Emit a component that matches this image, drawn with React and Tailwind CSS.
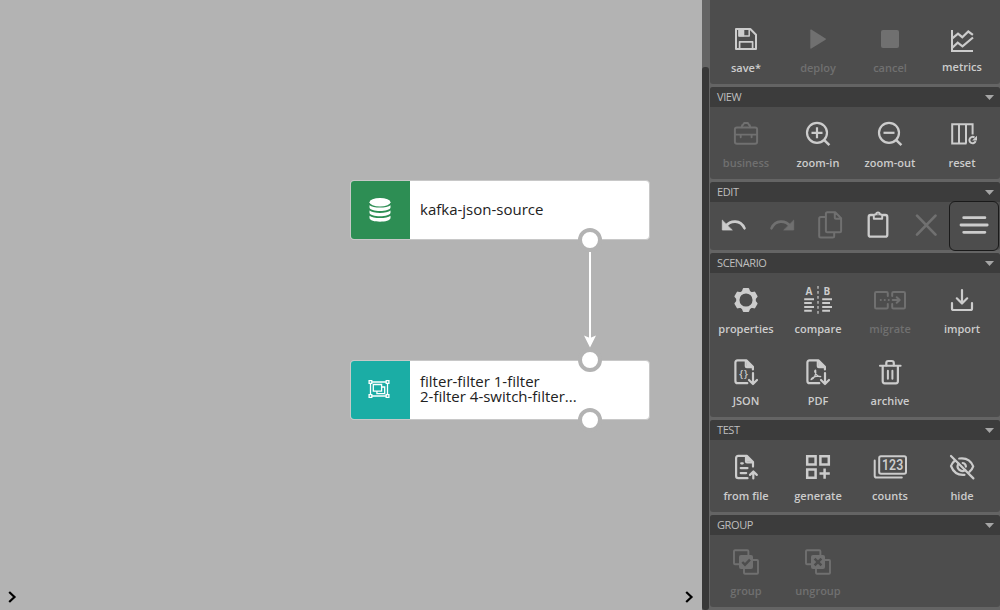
import React from "react";

const BG = "#4d4d4d";

function Icon({ children }) {
  return (
    <svg
      width="32"
      height="32"
      viewBox="0 0 32 32"
      fill="none"
      stroke="currentColor"
      strokeWidth="2.200"
      strokeLinecap="round"
      strokeLinejoin="round"
      className="shrink-0 overflow-visible"
    >
      {children}
    </svg>
  );
}

const filled = { fill: "currentColor", stroke: "none" };

const icons = {
  save: (
    <>
      <path d="M6 6h14.3l5.7 5.700V26H6z" strokeWidth="2" />
      <path d="M9.6 26v-7.200h13V26" strokeWidth="1.7" />
      <path d="M9 6v7h10.200V6" strokeWidth="1.5" />
      <path d="M8.500 6h5.800v7.400H8.500z" {...filled} />
    </>
  ),
  deploy: <path d="M8.300 7.200c0-.8.5-.9 1-.6l14.200 9c.6.4.6.8 0 1.200l-14.200 8.800c-.5.3-1 .2-1-.6z" {...filled} />,
  cancel: <rect x="7" y="7" width="18" height="18" rx="2" {...filled} />,
  metrics: (
    <g strokeLinecap="butt" strokeLinejoin="miter">
      <path d="M6 7v21h21" strokeWidth="2" />
      <path d="M6.300 15.300 12 10.700l4.300 3.500 6-5.700 4.600 3.300M6.300 24.700l5.400-5 4.800 3.600L27 14.500" />
    </g>
  ),
  business: (
    <>
      <rect x="4.900" y="9.600" width="22.200" height="16.200" rx="2" strokeWidth="2" />
      <path d="M11.900 9.300V8q0-1 1-1l1.200-2h3.800L19 7q1 0 1 1v1.300M5 16.600h22M10.700 17v2.200M21.600 17v2.200" strokeWidth="1.900" />
    </>
  ),
  zoomIn: (
    <g strokeLinecap="butt">
      <circle cx="15" cy="14.800" r="10" />
      <path d="M22 21.800l5.400 5.400" strokeWidth="2.500" />
      <path d="M9.500 14.800h11M15 9.300v11" />
    </g>
  ),
  zoomOut: (
    <g strokeLinecap="butt">
      <circle cx="15" cy="14.800" r="10" />
      <path d="M22 21.800l5.400 5.400" strokeWidth="2.500" />
      <path d="M9.500 14.800h11" />
    </g>
  ),
  reset: (
    <g strokeLinecap="butt" strokeLinejoin="miter">
      <path d="M20.500 25.500H6.200V6.200h20.400v10.300M13 6v19.500M20 6v19.500" strokeWidth="2" />
      <path d="M29.600 23.200a3.200 3.200 0 1 1-1.100-3.700" strokeWidth="2" />
      <path d="M31 17.800v4.800h-4.900z" {...filled} />
    </g>
  ),
  undo: (
    <>
      <path d="M7.500 17.500C12.500 11 22.500 10.500 26.500 19.300" strokeWidth="2.600" />
      <path d="M4.300 11.500v9.500h9.600z" {...filled} stroke="currentColor" strokeWidth=".8" />
    </>
  ),
  redo: (
    <g transform="matrix(-1 0 0 1 32 0)">
      <path d="M7.500 17.500C12.500 11 22.500 10.500 26.500 19.300" strokeWidth="2.600" />
      <path d="M4.300 11.500v9.500h9.600z" {...filled} stroke="currentColor" strokeWidth=".8" />
    </g>
  ),
  copy: (
    <g strokeWidth="2">
      <path d="M11 8H6.700Q5.200 8 5.200 9.500V27q0 1.500 1.500 1.500h12q1.500 0 1.500-1.500v-3" />
      <path d="M13.400 3.200h7.800l5.900 6v12.600q0 1.500-1.500 1.500H13.400q-1.500 0-1.500-1.500V4.700q0-1.500 1.500-1.500zM20.800 3.500v5.200q0 1 1 1h5" />
    </g>
  ),
  paste: (
    <>
      <path d="M11 6H8.700Q6.700 6 6.700 8v17.700q0 2 2 2h14.600q2 0 2-2V8q0-2-2-2H21" strokeWidth="2.300" />
      <path d="M11.800 9.800V6.500q0-1 1-1H14q.3-2 2-2t2 2h1.200q1 0 1 1v3.300z" strokeWidth="1.900" />
      <circle cx="16" cy="5.800" r=".8" {...filled} />
    </>
  ),
  remove: <path d="M7 6.600l18.500 19M25.500 6.600L7 25.600" strokeWidth="2.700" />,
  layout: <path d="M5.700 8.700h21.200M3 16h26.200M5.700 23.300h21.200" strokeWidth="2.800" />,
  properties: (
    <>
      <circle cx="16" cy="16" r="8.200" strokeWidth="3.300" />
      {[0, 60, 120, 180, 240, 300].map((a) => (
        <path key={a} transform={`rotate(${a} 16 16)`} d="M11.200 9.200l1.500-4.200q.2-.9 1-.9h4.600q.8 0 1 .9l1.500 4.200q-4.800-2.200-9.600 0z" {...filled} />
      ))}
    </>
  ),
  compare: (
    <g strokeLinecap="butt">
      <text x="7" y="11.300" textAnchor="middle" fontSize="10" fontWeight="700" fontFamily="Open Sans, sans-serif" fill="currentColor" stroke="none">A</text>
      <text x="24.800" y="11.300" textAnchor="middle" fontSize="10" fontWeight="700" fontFamily="Open Sans, sans-serif" fill="currentColor" stroke="none">B</text>
      <path d="M2.200 15.200H12M2.200 19h7.600M2.200 23H12M2.200 26.800h7.600M20.200 15.200H30M20.200 19h7.800M20.200 23H30M20.200 26.800h7.800" strokeWidth="1.900" />
      <path d="M16 2v28" strokeWidth="1.600" strokeDasharray="2.700 2.300" opacity=".75" />
    </g>
  ),
  migrate: (
    <g strokeWidth="2">
      <path d="M13.800 12V9.300q0-1.300-1.300-1.300H2.300Q1 8 1 9.300v13.900q0 1.300 1.300 1.300h10.200q1.300 0 1.300-1.300V20M18.200 12V9.300q0-1.300 1.300-1.300h10.200Q31 8 31 9.300v13.900q0 1.300-1.300 1.300H19.500q-1.300 0-1.300-1.300V20" />
      <path d="M6.700 16h.1M10.700 16h.1M14.700 16h.1M18.700 16h6.700M22.700 13.200l3 2.800-3 2.800" />
    </g>
  ),
  import: <path d="M6 19v5.500Q6 26 7.500 26h17q1.500 0 1.500-1.500V19M16 6v13M10.800 14.300l5.200 5.200 5.200-5.200" />,
  json: (
    <>
      <path d="M17.300 27.200H7.600q-2.200 0-2.200-2.200V6.600q0-2.200 2.200-2.200h9l6.300 6.400v2.600M15.800 4.800v5.400q0 1 1 1h5.500M23 17v10.500M19 24l4 4 4-4" />
      <path d="M17 5v5h5.500z" {...filled} />
      <text x="13.900" y="21.600" textAnchor="middle" fontSize="10" fontWeight="600" fontFamily="Open Sans, sans-serif" letterSpacing=".8" fill="currentColor" stroke="none">{"{}"}</text>
    </>
  ),
  pdf: (
    <>
      <path d="M17.300 27.200H7.600q-2.200 0-2.200-2.200V6.600q0-2.200 2.200-2.200h9l6.300 6.400v2.600M15.800 4.800v5.400q0 1 1 1h5.500M23 17v10.500M19 24l4 4 4-4" />
      <path d="M17 5v5h5.500z" {...filled} />
      <path d="M13.600 14.200q.8 3.300-.8 6-1.600 3-3.700 3.500.4-1.900 3.900-3 3.500-1 5.700-.2-3 .6-5.600-4-.9-1.600.5-2.300z" strokeWidth="1.300" />
    </>
  ),
  archive: (
    <>
      <path d="M8.700 10v15.300q0 2 2 2h11.200q2 0 2-2V10M12.300 9.500V7q0-2 2-2h3.500q2 0 2 2v2.500" />
      <path d="M6 9.700h20.600" strokeWidth="2.100" />
      <path d="M13.900 14.700v8M18.400 14.700v8" strokeWidth="2" />
    </>
  ),
  fromFile: (
    <>
      <path d="M17.500 27.200H8.300q-2.200 0-2.200-2.200V7.100q0-2.200 2.200-2.200h8.500l6.200 6.200v4.500M16 5.200v5.200q0 1 1 1h5.500" />
      <path d="M17 5.500v5h5z" {...filled} />
      <path d="M11.200 12.300h1.600M10.700 17.100h6.800M10.700 22.100h5.500" />
      <path d="M23.300 21.500v6M20 23.900l3.400-3.400 3.400 3.400" />
    </>
  ),
  generate: (
    <path
      d="M5.200 5.200h8.400v8.400H5.200zM18.400 5.200h8.400v8.400h-8.400zM5.200 18.400h8.400v8.400H5.200zM22.600 17.500v10.300M17.500 22.600h10.300"
      strokeLinecap="butt"
      strokeLinejoin="miter"
      strokeWidth="2.500"
    />
  ),
  counts: (
    <g strokeWidth="2">
      <rect x="5.200" y="5.200" width="26.800" height="17.600" rx="1.800" />
      <path d="M.7 9.500v15.200q0 1.800 1.800 1.800h25.300" />
      <text x="8" y="19.200" textLength="21.200" lengthAdjust="spacingAndGlyphs" fontSize="14" fontWeight="600" fontFamily="Roboto, sans-serif" fill="currentColor" stroke="none">123</text>
    </g>
  ),
  hide: (
    <>
      <path d="M5 5l22.400 22.400M9 9.300Q6 11.900 5 15q3.700 9.700 13.500 8.800M13.200 7.500Q23.500 6 27.200 15.300q-1.100 3.200-3.600 5.400" />
      <path d="M12.600 12.600a4.600 4.600 0 0 0 6.600 6.300M16.700 12a3.900 3.900 0 0 1 3.200 3.600" />
    </>
  ),
  group: (
    <>
      <rect x="4" y="4.200" width="14.400" height="14" rx="1" strokeWidth="1.900" />
      <rect x="14" y="14" width="14" height="13.800" rx="1" strokeWidth="1.900" />
      <rect x="9" y="9" width="14" height="14" rx="2" fill="currentColor" stroke="none" />
      <path d="M12.300 16l2.700 2.700 5-5" stroke={BG} strokeWidth="2.400" strokeLinecap="butt" strokeLinejoin="miter" />
    </>
  ),
  ungroup: (
    <>
      <rect x="4" y="4.200" width="14.400" height="14" rx="1" strokeWidth="1.900" />
      <rect x="14" y="14" width="14" height="13.800" rx="1" strokeWidth="1.900" />
      <rect x="9" y="9" width="14" height="14" rx="2" fill="currentColor" stroke="none" />
      <path d="M12.600 12.600l6.800 6.800M19.400 12.600l-6.800 6.800" stroke={BG} strokeWidth="2.500" strokeLinecap="butt" />
    </>
  ),
};

function Tool({ icon, label, disabled, raised }) {
  return (
    <button
      className={`flex h-[72px] w-[72px] flex-col items-center pt-[11px] ${disabled ? "text-[#707070]" : "text-[#cccccc]"}`}
    >
      <Icon>{icons[icon]}</Icon>
      <span className={`text-[11px] leading-4 font-semibold whitespace-nowrap ${raised ? "mt-1" : "mt-[5px]"}`}>{label}</span>
    </button>
  );
}

function SmallTool({ icon, disabled, active }) {
  return (
    <button
      className={`flex size-12 justify-center pt-[7px] ${disabled ? "text-[#707070]" : "text-[#cccccc]"} ${active ? "rounded-[5px] outline outline-1 outline-[#1a1a1a]" : ""}`}
    >
      <Icon>{icons[icon]}</Icon>
    </button>
  );
}

function Panel({ title, children }) {
  return (
    <section className="rounded-[3px] bg-[#4d4d4d]">
      <header className="flex h-5 items-center justify-between rounded-t-[3px] bg-[#3c3c3c] pr-1.5 pl-[7px] text-[#bfbfbf]">
        <span className="text-[11px] leading-5 tracking-[-0.4px]">{title}</span>
        <svg width="9" height="5" viewBox="0 0 9 5" fill="#a6a6a6">
          <path d="M0 0h9L4.500 5z" />
        </svg>
      </header>
      <div className="flex flex-wrap">{children}</div>
    </section>
  );
}

function Port({ className }) {
  return <span className={`absolute size-6 rounded-full border-[4.500px] border-[#b3b3b3] bg-white ${className}`} />;
}

function Node({ className, color, icon, children }) {
  return (
    <div className={`absolute left-[350px] flex h-[60px] w-[300px] overflow-hidden rounded-[4px] border border-[#c8c8c8] bg-white ${className}`}>
      <div className={`flex w-[59px] items-center justify-center pr-0.5 text-white ${color}`}>{icon}</div>
      <div className="flex flex-col justify-center pb-0.5 pl-2.5 text-[15px] leading-[15px] text-[#222222]">{children}</div>
    </div>
  );
}

function Chevron() {
  return (
    <svg width="10" height="12" viewBox="0 0 10 12" fill="none" stroke="#000" strokeWidth="2.200">
      <path d="M1.200 1 6.500 6 1.200 11" />
    </svg>
  );
}

export default function App() {
  return (
    <div className="flex h-[610px] w-[1000px] overflow-hidden bg-[#b3b3b3] font-['Open_Sans',sans-serif]">
      <main className="relative flex w-[702px] shrink-0 items-end justify-between pr-[7px] pb-[7px] pl-2">
        <Node
          className="top-[180px]"
          color="bg-[#2d8e54]"
          icon={
            <svg width="22" height="24" viewBox="0 0 22 24" fill="currentColor">
              <ellipse cx="11" cy="4.300" rx="10.500" ry="4.200" />
              <path d="M.5 7.200c3.500 3.200 17.500 3.200 21 0v2.300c0 4.600-21 4.600-21 0zM.5 12.500c3.500 3.200 17.500 3.200 21 0v2.300c0 4.600-21 4.600-21 0zM.5 17.700c3.500 3.200 17.500 3.200 21 0V20c0 4.900-21 4.900-21 0z" />
            </svg>
          }
        >
          kafka-json-source
        </Node>
        <Node
          className="top-[360px]"
          color="bg-[#1bada5]"
          icon={
            <svg width="22" height="20" viewBox="0 0 22 20" fill="none" stroke="currentColor" strokeWidth="1.300" className="mr-0.5 mb-0.5">
              <path d="M4 3h14M4 17h14M2.500 4.500v11M19.500 4.500v11" />
              <path d="M1.100 1.600h2.700v2.700H1.100zM18.200 1.600h2.700v2.700h-2.700zM1.100 15.700h2.700v2.700H1.100zM18.200 15.700h2.700v2.700h-2.700zM5.300 5.500h8.300v6.700H5.300zM13.600 8h3.100v6.700H8.900v-2.500" />
            </svg>
          }
        >
          <span>filter-filter 1-filter</span>
          <span>2-filter 4-switch-filter...</span>
        </Node>
        <svg className="absolute top-[250px] left-[580px]" width="20" height="100" viewBox="0 0 20 100">
          <path d="M10 2v86" stroke="#fff" strokeWidth="2" />
          <path d="M4 85.500l6 2.500 6-2.500L10 97.500z" fill="#fff" />
        </svg>
        <Port className="top-[228px] left-[578px]" />
        <Port className="top-[348px] left-[578px]" />
        <Port className="top-[408px] left-[578px]" />
        <Chevron />
        <Chevron />
      </main>

      <div className="flex w-2 shrink-0 flex-col bg-[#646464] pt-[67px] pr-px">
        <div className="h-[543px] rounded-[3px] bg-[#383838]" />
      </div>

      <aside className="flex w-[290px] shrink-0 flex-col gap-[3px] bg-[#646464]">
        <section className="flex h-[84px] items-end rounded-b-[3px] bg-[#4d4d4d]">
          <Tool icon="save" label="save*" />
          <Tool icon="deploy" label="deploy" disabled />
          <Tool icon="cancel" label="cancel" disabled />
          <Tool icon="metrics" label="metrics" raised />
        </section>
        <Panel title="VIEW">
          <Tool icon="business" label="business" disabled />
          <Tool icon="zoomIn" label="zoom-in" />
          <Tool icon="zoomOut" label="zoom-out" />
          <Tool icon="reset" label="reset" />
        </Panel>
        <Panel title="EDIT">
          <SmallTool icon="undo" />
          <SmallTool icon="redo" disabled />
          <SmallTool icon="copy" disabled />
          <SmallTool icon="paste" />
          <SmallTool icon="remove" disabled />
          <SmallTool icon="layout" active />
        </Panel>
        <Panel title="SCENARIO">
          <Tool icon="properties" label="properties" />
          <Tool icon="compare" label="compare" />
          <Tool icon="migrate" label="migrate" disabled />
          <Tool icon="import" label="import" />
          <Tool icon="json" label="JSON" />
          <Tool icon="pdf" label="PDF" />
          <Tool icon="archive" label="archive" />
        </Panel>
        <Panel title="TEST">
          <Tool icon="fromFile" label="from file" />
          <Tool icon="generate" label="generate" />
          <Tool icon="counts" label="counts" />
          <Tool icon="hide" label="hide" />
        </Panel>
        <Panel title="GROUP">
          <Tool icon="group" label="group" disabled />
          <Tool icon="ungroup" label="ungroup" disabled />
        </Panel>
      </aside>
    </div>
  );
}
